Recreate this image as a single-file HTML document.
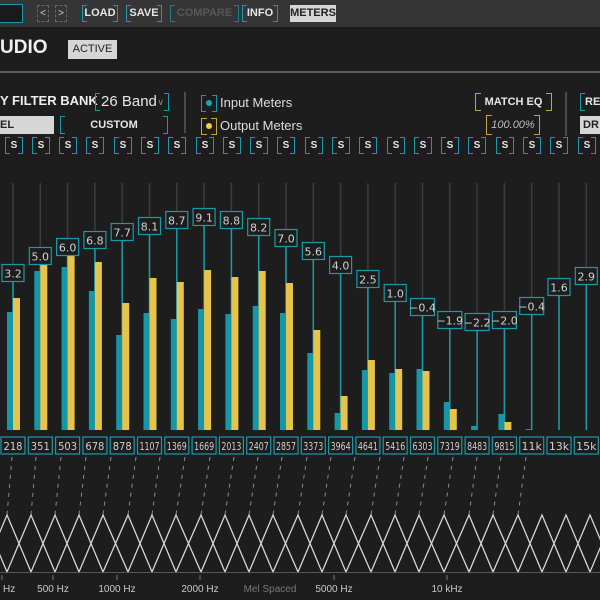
<!DOCTYPE html>
<html><head><meta charset="utf-8">
<style>
*{margin:0;padding:0;box-sizing:border-box}
body{width:600px;height:600px;overflow:hidden;background:#1d1d1d;font-family:"Liberation Sans",sans-serif;position:relative;color:#ddd}
.top{position:absolute;left:0;top:0;width:600px;height:27px;background:#353535}
.a{position:absolute}
.b{position:absolute;font-size:11px;font-weight:bold;color:#e6e6e6;text-align:center;
background:
linear-gradient(#1a9aa8,#1a9aa8) left top/1px 100% no-repeat,
linear-gradient(#1a9aa8,#1a9aa8) right top/1px 100% no-repeat,
linear-gradient(#1a9aa8,#1a9aa8) left top/5px 1px no-repeat,
linear-gradient(#1a9aa8,#1a9aa8) right top/5px 1px no-repeat,
linear-gradient(#1a9aa8,#1a9aa8) left bottom/5px 1px no-repeat,
linear-gradient(#1a9aa8,#1a9aa8) right bottom/5px 1px no-repeat}
.y{background:
linear-gradient(#c9a43a,#c9a43a) left top/1px 100% no-repeat,
linear-gradient(#c9a43a,#c9a43a) right top/1px 100% no-repeat,
linear-gradient(#c9a43a,#c9a43a) left top/6px 1px no-repeat,
linear-gradient(#c9a43a,#c9a43a) right top/6px 1px no-repeat,
linear-gradient(#c9a43a,#c9a43a) left bottom/6px 1px no-repeat,
linear-gradient(#c9a43a,#c9a43a) right bottom/6px 1px no-repeat}
.l{position:absolute;background:#d6d6d6;color:#222;font-size:11px;font-weight:bold;text-align:center}
.s{position:absolute;top:137px;width:18px;height:17px;line-height:17px;font-size:10px}
</style></head><body>
<div class="top"></div>
<div class="a" style="left:-2px;top:4px;width:25px;height:19px;border:1px solid #1a9aa8;background:#1a1a1a"></div>
<div class="a" style="left:37px;top:5px;width:12px;height:17px;border:1px dashed #666;color:#ccc;font-size:10px;text-align:center;line-height:15px">&lt;</div>
<div class="a" style="left:55px;top:5px;width:12px;height:17px;border:1px dashed #666;color:#ccc;font-size:10px;text-align:center;line-height:15px">&gt;</div>
<div class="b" style="left:82px;top:5px;width:36px;height:17px;line-height:17px">LOAD</div>
<div class="b" style="left:126px;top:5px;width:36px;height:17px;line-height:17px">SAVE</div>
<div class="b" style="left:170px;top:5px;width:69px;height:17px;line-height:17px;color:#666;opacity:.7">COMPARE</div>
<div class="b" style="left:242px;top:5px;width:36px;height:17px;line-height:17px">INFO</div>
<div class="l" style="left:290px;top:5px;width:46px;height:17px;line-height:17px">METERS</div>

<div class="a" style="left:0;top:37px;font-size:19px;font-weight:bold;color:#f0f0f0">UDIO</div>
<div class="l" style="left:68px;top:40px;width:49px;height:19px;line-height:19px;font-weight:normal">ACTIVE</div>
<div class="a" style="left:0;top:71px;width:600px;height:2px;background:#5a5a5a"></div>

<div class="a" style="left:0;top:93px;font-size:13px;font-weight:bold;color:#eee">Y FILTER BANK</div>
<div class="b" style="left:95px;top:93px;width:74px;height:18px;line-height:18px;font-weight:normal;font-size:15px;text-align:left;padding-left:6px">26 Band<span style="position:absolute;right:5px;font-size:9px;color:#888">&#8744;</span></div>
<div class="l" style="left:0;top:116px;width:54px;height:18px;line-height:18px;text-align:left">EL</div>
<div class="b" style="left:60px;top:116px;width:108px;height:18px;line-height:18px">CUSTOM</div>
<div class="a" style="left:184px;top:92px;width:2px;height:41px;background:#4a4a4a"></div>
<div class="b" style="left:201px;top:95px;width:16px;height:17px"><span style="position:absolute;left:5px;top:5px;width:6px;height:6px;border-radius:50%;background:#19a7b8"></span></div>
<div class="a" style="left:220px;top:95px;font-size:13px;color:#ddd">Input Meters</div>
<div class="b y" style="left:201px;top:118px;width:16px;height:17px"><span style="position:absolute;left:5px;top:5px;width:6px;height:6px;border-radius:50%;background:#f2c94c"></span></div>
<div class="a" style="left:220px;top:118px;font-size:13px;color:#ddd">Output Meters</div>
<div class="b y" style="left:475px;top:93px;width:77px;height:18px;line-height:18px">MATCH EQ</div>
<div class="b y" style="left:486px;top:115px;width:54px;height:20px;line-height:20px;font-weight:normal;font-style:italic;color:#bbb">100.00%</div>
<div class="a" style="left:565px;top:92px;width:2px;height:44px;background:#4a4a4a"></div>
<div class="b" style="left:580px;top:93px;width:30px;height:18px;line-height:18px;text-align:left;padding-left:5px">RE</div>
<div class="l" style="left:580px;top:116px;width:30px;height:18px;line-height:18px;text-align:left;padding-left:3px">DR</div>

<div class="b s" style="left:5px">S</div><div class="b s" style="left:32px">S</div><div class="b s" style="left:59px">S</div><div class="b s" style="left:86px">S</div><div class="b s" style="left:114px">S</div><div class="b s" style="left:141px">S</div><div class="b s" style="left:168px">S</div><div class="b s" style="left:196px">S</div><div class="b s" style="left:223px">S</div><div class="b s" style="left:250px">S</div><div class="b s" style="left:277px">S</div><div class="b s" style="left:305px">S</div><div class="b s" style="left:332px">S</div><div class="b s" style="left:359px">S</div><div class="b s" style="left:387px">S</div><div class="b s" style="left:414px">S</div><div class="b s" style="left:441px">S</div><div class="b s" style="left:468px">S</div><div class="b s" style="left:496px">S</div><div class="b s" style="left:523px">S</div><div class="b s" style="left:550px">S</div><div class="b s" style="left:578px">S</div>

<svg class="a" style="left:0;top:0" width="600" height="600" viewBox="0 0 600 600">
<g stroke="#3c3c3c" stroke-width="1.5">
<line x1="13" y1="183" x2="13" y2="430"/><line x1="40.3" y1="183" x2="40.3" y2="430"/><line x1="67.6" y1="183" x2="67.6" y2="430"/><line x1="94.9" y1="183" x2="94.9" y2="430"/><line x1="122.2" y1="183" x2="122.2" y2="430"/><line x1="149.5" y1="183" x2="149.5" y2="430"/><line x1="176.8" y1="183" x2="176.8" y2="430"/><line x1="204.1" y1="183" x2="204.1" y2="430"/><line x1="231.4" y1="183" x2="231.4" y2="430"/><line x1="258.7" y1="183" x2="258.7" y2="430"/><line x1="286" y1="183" x2="286" y2="430"/><line x1="313.3" y1="183" x2="313.3" y2="430"/><line x1="340.6" y1="183" x2="340.6" y2="430"/><line x1="367.9" y1="183" x2="367.9" y2="430"/><line x1="395.2" y1="183" x2="395.2" y2="430"/><line x1="422.5" y1="183" x2="422.5" y2="430"/><line x1="449.8" y1="183" x2="449.8" y2="430"/><line x1="477.1" y1="183" x2="477.1" y2="430"/><line x1="504.4" y1="183" x2="504.4" y2="430"/><line x1="531.7" y1="183" x2="531.7" y2="430"/><line x1="559" y1="183" x2="559" y2="430"/><line x1="586.3" y1="183" x2="586.3" y2="430"/>
</g>
<g stroke="#1a9aa8" stroke-width="1.5">
<line x1="13" y1="273" x2="13" y2="430"/><line x1="40.3" y1="256" x2="40.3" y2="430"/><line x1="67.6" y1="247" x2="67.6" y2="430"/><line x1="94.9" y1="240" x2="94.9" y2="430"/><line x1="122.2" y1="232" x2="122.2" y2="430"/><line x1="149.5" y1="226" x2="149.5" y2="430"/><line x1="176.8" y1="220" x2="176.8" y2="430"/><line x1="204.1" y1="217" x2="204.1" y2="430"/><line x1="231.4" y1="220" x2="231.4" y2="430"/><line x1="258.7" y1="227" x2="258.7" y2="430"/><line x1="286" y1="238" x2="286" y2="430"/><line x1="313.3" y1="251" x2="313.3" y2="430"/><line x1="340.6" y1="265" x2="340.6" y2="430"/><line x1="367.9" y1="279" x2="367.9" y2="430"/><line x1="395.2" y1="293" x2="395.2" y2="430"/><line x1="422.5" y1="307" x2="422.5" y2="430"/><line x1="449.8" y1="320" x2="449.8" y2="430"/><line x1="477.1" y1="322" x2="477.1" y2="430"/><line x1="504.4" y1="320" x2="504.4" y2="430"/><line x1="531.7" y1="306" x2="531.7" y2="430"/><line x1="559" y1="287" x2="559" y2="430"/><line x1="586.3" y1="276" x2="586.3" y2="430"/>
</g>
<g fill="#1597a8">
<rect x="7" y="312" width="6" height="118"/><rect x="34.3" y="271" width="6" height="159"/><rect x="61.6" y="267" width="6" height="163"/><rect x="88.9" y="291" width="6" height="139"/><rect x="116.2" y="335" width="6" height="95"/><rect x="143.5" y="313" width="6" height="117"/><rect x="170.8" y="319" width="6" height="111"/><rect x="198.1" y="309" width="6" height="121"/><rect x="225.4" y="314" width="6" height="116"/><rect x="252.7" y="306" width="6" height="124"/><rect x="280" y="313" width="6" height="117"/><rect x="307.3" y="353" width="6" height="77"/><rect x="334.6" y="413" width="6" height="17"/><rect x="361.9" y="370" width="6" height="60"/><rect x="389.2" y="373" width="6" height="57"/><rect x="416.5" y="369" width="6" height="61"/><rect x="443.8" y="402" width="6" height="28"/><rect x="471.1" y="426" width="6" height="4"/><rect x="498.4" y="414" width="6" height="16"/><rect x="525.7" y="429" width="6" height="1"/>
</g>
<g fill="#e6c34a">
<rect x="13" y="298" width="7" height="132"/><rect x="40.3" y="265" width="7" height="165"/><rect x="67.6" y="252" width="7" height="178"/><rect x="94.9" y="262" width="7" height="168"/><rect x="122.2" y="303" width="7" height="127"/><rect x="149.5" y="278" width="7" height="152"/><rect x="176.8" y="282" width="7" height="148"/><rect x="204.1" y="270" width="7" height="160"/><rect x="231.4" y="277" width="7" height="153"/><rect x="258.7" y="271" width="7" height="159"/><rect x="286" y="283" width="7" height="147"/><rect x="313.3" y="330" width="7" height="100"/><rect x="340.6" y="396" width="7" height="34"/><rect x="367.9" y="360" width="7" height="70"/><rect x="395.2" y="369" width="7" height="61"/><rect x="422.5" y="371" width="7" height="59"/><rect x="449.8" y="409" width="7" height="21"/><rect x="504.4" y="422" width="7" height="8"/>
</g>
<g fill="#1d1d1d" stroke="#1a9aa8" stroke-width="1.2">
<rect x="2" y="264.5" width="22" height="17"/><rect x="29.3" y="247.5" width="22" height="17"/><rect x="56.6" y="238.5" width="22" height="17"/><rect x="83.9" y="231.5" width="22" height="17"/><rect x="111.2" y="223.5" width="22" height="17"/><rect x="138.5" y="217.5" width="22" height="17"/><rect x="165.8" y="211.5" width="22" height="17"/><rect x="193.1" y="208.5" width="22" height="17"/><rect x="220.4" y="211.5" width="22" height="17"/><rect x="247.7" y="218.5" width="22" height="17"/><rect x="275" y="229.5" width="22" height="17"/><rect x="302.3" y="242.5" width="22" height="17"/><rect x="329.6" y="256.5" width="22" height="17"/><rect x="356.9" y="270.5" width="22" height="17"/><rect x="384.2" y="284.5" width="22" height="17"/><rect x="410.5" y="298.5" width="24" height="17"/><rect x="437.8" y="311.5" width="24" height="17"/><rect x="465.1" y="313.5" width="24" height="17"/><rect x="492.4" y="311.5" width="24" height="17"/><rect x="519.7" y="297.5" width="24" height="17"/><rect x="548" y="278.5" width="22" height="17"/><rect x="575.3" y="267.5" width="22" height="17"/>
</g>
<g fill="#d0d0d0" font-family="DejaVu Sans,sans-serif" font-size="11" text-anchor="middle">
<text x="13" y="277.5">3.2</text><text x="40.3" y="260.5">5.0</text><text x="67.6" y="251.5">6.0</text><text x="94.9" y="244.5">6.8</text><text x="122.2" y="236.5">7.7</text><text x="149.5" y="230.5">8.1</text><text x="176.8" y="224.5">8.7</text><text x="204.1" y="221.5">9.1</text><text x="231.4" y="224.5">8.8</text><text x="258.7" y="231.5">8.2</text><text x="286" y="242.5">7.0</text><text x="313.3" y="255.5">5.6</text><text x="340.6" y="269.5">4.0</text><text x="367.9" y="283.5">2.5</text><text x="395.2" y="297.5">1.0</text><text x="422.5" y="311.5">−0.4</text><text x="449.8" y="324.5">−1.9</text><text x="477.1" y="326.5">−2.2</text><text x="504.4" y="324.5">−2.0</text><text x="531.7" y="310.5">−0.4</text><text x="559" y="291.5">1.6</text><text x="586.3" y="280.5">2.9</text>
</g>
<g fill="#1d1d1d" stroke="#1a9aa8" stroke-width="1.2">
<rect x="1" y="437" width="24" height="17"/><rect x="28.3" y="437" width="24" height="17"/><rect x="55.6" y="437" width="24" height="17"/><rect x="82.9" y="437" width="24" height="17"/><rect x="110.2" y="437" width="24" height="17"/><rect x="137.5" y="437" width="24" height="17"/><rect x="164.8" y="437" width="24" height="17"/><rect x="192.1" y="437" width="24" height="17"/><rect x="219.4" y="437" width="24" height="17"/><rect x="246.7" y="437" width="24" height="17"/><rect x="274" y="437" width="24" height="17"/><rect x="301.3" y="437" width="24" height="17"/><rect x="328.6" y="437" width="24" height="17"/><rect x="355.9" y="437" width="24" height="17"/><rect x="383.2" y="437" width="24" height="17"/><rect x="410.5" y="437" width="24" height="17"/><rect x="437.8" y="437" width="24" height="17"/><rect x="465.1" y="437" width="24" height="17"/><rect x="492.4" y="437" width="24" height="17"/><rect x="519.7" y="437" width="24" height="17"/><rect x="547" y="437" width="24" height="17"/><rect x="574.3" y="437" width="24" height="17"/>
</g>
<g fill="#d0d0d0" font-family="DejaVu Sans,sans-serif" font-size="11" text-anchor="middle">
<text x="13" y="450" textLength="19" lengthAdjust="spacingAndGlyphs">218</text><text x="40.3" y="450" textLength="19" lengthAdjust="spacingAndGlyphs">351</text><text x="67.6" y="450" textLength="19" lengthAdjust="spacingAndGlyphs">503</text><text x="94.9" y="450" textLength="19" lengthAdjust="spacingAndGlyphs">678</text><text x="122.2" y="450" textLength="19" lengthAdjust="spacingAndGlyphs">878</text><text x="149.5" y="450" textLength="20" lengthAdjust="spacingAndGlyphs">1107</text><text x="176.8" y="450" textLength="20" lengthAdjust="spacingAndGlyphs">1369</text><text x="204.1" y="450" textLength="20" lengthAdjust="spacingAndGlyphs">1669</text><text x="231.4" y="450" textLength="20" lengthAdjust="spacingAndGlyphs">2013</text><text x="258.7" y="450" textLength="20" lengthAdjust="spacingAndGlyphs">2407</text><text x="286" y="450" textLength="20" lengthAdjust="spacingAndGlyphs">2857</text><text x="313.3" y="450" textLength="20" lengthAdjust="spacingAndGlyphs">3373</text><text x="340.6" y="450" textLength="20" lengthAdjust="spacingAndGlyphs">3964</text><text x="367.9" y="450" textLength="20" lengthAdjust="spacingAndGlyphs">4641</text><text x="395.2" y="450" textLength="20" lengthAdjust="spacingAndGlyphs">5416</text><text x="422.5" y="450" textLength="20" lengthAdjust="spacingAndGlyphs">6303</text><text x="449.8" y="450" textLength="20" lengthAdjust="spacingAndGlyphs">7319</text><text x="477.1" y="450" textLength="20" lengthAdjust="spacingAndGlyphs">8483</text><text x="504.4" y="450" textLength="20" lengthAdjust="spacingAndGlyphs">9815</text><text x="531.7" y="450">11k</text><text x="559" y="450">13k</text><text x="586.3" y="450">15k</text>
</g>
<g stroke="#8a8a8a" stroke-width="1" stroke-dasharray="4 5">
<line x1="12" y1="457" x2="7" y2="515"/><line x1="36" y1="457" x2="31" y2="515"/><line x1="61" y1="457" x2="55" y2="515"/><line x1="86" y1="457" x2="79" y2="515"/><line x1="111" y1="457" x2="103" y2="515"/><line x1="136" y1="457" x2="128" y2="515"/><line x1="160" y1="457" x2="152" y2="515"/><line x1="185" y1="457" x2="176" y2="515"/><line x1="210" y1="457" x2="201" y2="515"/><line x1="234" y1="457" x2="225" y2="515"/><line x1="258" y1="457" x2="249" y2="515"/><line x1="282" y1="457" x2="273" y2="515"/><line x1="307" y1="457" x2="298" y2="515"/><line x1="331" y1="457" x2="322" y2="515"/><line x1="355" y1="457" x2="346" y2="515"/><line x1="380" y1="457" x2="371" y2="515"/><line x1="404" y1="457" x2="395" y2="515"/><line x1="428" y1="457" x2="419" y2="515"/><line x1="453" y1="457" x2="444" y2="515"/><line x1="477" y1="457" x2="469" y2="515"/><line x1="501" y1="457" x2="493" y2="515"/><line x1="526" y1="457" x2="518" y2="515"/>
</g>
<polyline fill="none" stroke="#d8d8d8" stroke-width="1.3" points="-17,572 7,515 31,572 55,515 79,572 103,515 128,572 152,515 176,572 201,515 225,572 249,515 273,572 298,515 322,572 346,515 371,572 395,515 419,572 444,515 469,572 493,515 518,572 542,515 566,572 590,515 614,572"/>
<polyline fill="none" stroke="#d8d8d8" stroke-width="1.3" points="-17,515 7,572 31,515 55,572 79,515 103,572 128,515 152,572 176,515 201,572 225,515 249,572 273,515 298,572 322,515 346,572 371,515 395,572 419,515 444,572 469,515 493,572 518,515 542,572 566,515 590,572 614,515"/>
<line x1="0" y1="572.5" x2="600" y2="572.5" stroke="#555" stroke-width="1"/>
<g stroke="#777"><line x1="2" y1="575" x2="2" y2="580"/><line x1="53" y1="575" x2="53" y2="580"/><line x1="117" y1="575" x2="117" y2="580"/><line x1="200" y1="575" x2="200" y2="580"/><line x1="334" y1="575" x2="334" y2="580"/><line x1="447" y1="575" x2="447" y2="580"/></g>
<g fill="#c8c8c8" font-family="Liberation Sans,sans-serif" font-size="10" text-anchor="middle">
<text x="5" y="592">0 Hz</text><text x="53" y="592">500 Hz</text><text x="117" y="592">1000 Hz</text><text x="200" y="592">2000 Hz</text><text x="270" y="592" fill="#777">Mel Spaced</text><text x="334" y="592">5000 Hz</text><text x="447" y="592">10 kHz</text>
</g>
</svg>
</body></html>
